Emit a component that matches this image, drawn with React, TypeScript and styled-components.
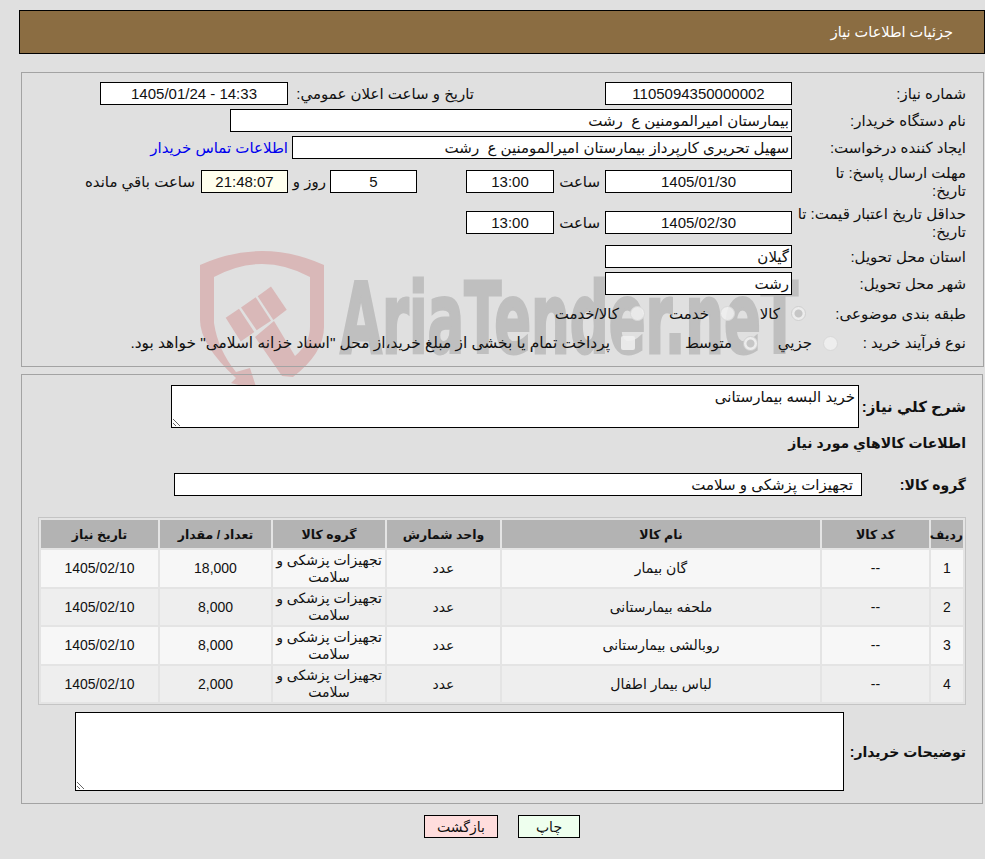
import React from 'react';
import styled, { createGlobalStyle } from 'styled-components';

const GlobalStyle = createGlobalStyle`
  html, body {
    margin: 0;
    padding: 0;
    background: #e0e0e0;
  }
  body {
    font-family: "Liberation Sans", "DejaVu Sans", sans-serif;
    font-size: 15px;
    color: #111;
  }
`;

const items = [
  { id: 1, name: 'گان بيمار', qty: '18,000' },
  { id: 2, name: 'ملحفه بيمارستانی', qty: '8,000' },
  { id: 3, name: 'روبالشی بيمارستانی', qty: '8,000' },
  { id: 4, name: 'لباس بيمار اطفال', qty: '2,000' },
];

function Watermark() {
  return (
    <WatermarkSvg viewBox="0 0 620 150" width="620" height="150">
      <g fill="#d9b8b8">
        <path d="M10 20 Q72 -8 134 20 L134 82 Q134 108 103 132 L92 131 L65 92 L84 76 L105 111 Q120 98 120 82 L120 32 Q72 6 24 32 L24 78 Q28 105 46 127 L60 123 L67 145 L41 138 L46 133 Q10 100 10 75 Z" />
        <path d="M35.7 72.7 L49 63.8 L64.3 87 L50.7 96.6 Z" />
        <path d="M51 62.5 L65.7 52.2 L81 75.8 L66.7 85.3 Z" />
        <path d="M67.7 51.2 L81 41.6 L96.7 64.8 L83.3 75 Z" />
      </g>
      <WatermarkText x="150" y="108" textLength="458" lengthAdjust="spacingAndGlyphs">
        AriaTender.neT
      </WatermarkText>
    </WatermarkSvg>
  );
}

export default function App() {
  return (
    <>
      <GlobalStyle />
      <Page dir="rtl">
        <Watermark />
        <Content>
          <Header>جزئيات اطلاعات نياز</Header>

          <InfoPanel>
            <Row $h={27}>
              <Label>شماره نياز:</Label>
              <Field $w={187} $center>1105094350000002</Field>
              <InlineLabel $w={317} $pad={131}>تاريخ و ساعت اعلان عمومي:</InlineLabel>
              <Field $w={188} $center>14:33 - 1405/01/24</Field>
            </Row>
            <Row $h={27}>
              <Label>نام دستگاه خريدار:</Label>
              <Field $w={562}>بيمارستان اميرالمومنين ع  رشت</Field>
            </Row>
            <Row $h={34}>
              <Label>ايجاد كننده درخواست:</Label>
              <Field $w={500}>سهيل تحريری كارپرداز بيمارستان اميرالمومنين ع  رشت</Field>
              <ContactLink href="#" onClick={(e) => e.preventDefault()}>اطلاعات تماس خريدار</ContactLink>
            </Row>
            <Row $h={41}>
              <Label $lift>مهلت ارسال پاسخ: تا<br />تاريخ:</Label>
              <Field $w={187} $center>1405/01/30</Field>
              <InlineLabel $w={51} $pad={5}>ساعت</InlineLabel>
              <Field $w={88} $center>13:00</Field>
              <Spacer $w={49} />
              <Field $w={87} $center>5</Field>
              <InlineLabel $w={42} $pad={4}>روز و</InlineLabel>
              <Field $w={87} $center $tint="#ffffee">21:48:07</Field>
              <InlineLabel $w={120} $pad={6}>ساعت باقي مانده</InlineLabel>
            </Row>
            <Row $h={34}>
              <Label $lift>حداقل تاريخ اعتبار قيمت: تا<br />تاريخ:</Label>
              <Field $w={187} $center>1405/02/30</Field>
              <InlineLabel $w={51} $pad={5}>ساعت</InlineLabel>
              <Field $w={88} $center>13:00</Field>
            </Row>
            <Row $h={27}>
              <Label>استان محل تحويل:</Label>
              <Field $w={187}>گيلان</Field>
            </Row>
            <Row $h={27}>
              <Label>شهر محل تحويل:</Label>
              <Field $w={187}>رشت</Field>
            </Row>
            <ChoiceRow $h={29}>
              <Label $mid>طبقه بندی موضوعی:</Label>
              <Choices $pull={-14}>
                <Choice $w={71}><RadioMark $checked />كالا</Choice>
                <Choice $w={90}><RadioMark />خدمت</Choice>
                <Choice><RadioMark />كالا/خدمت</Choice>
              </Choices>
            </ChoiceRow>
            <ChoiceRow $h={30}>
              <Label $mid>نوع فرآيند خريد :</Label>
              <Choices $pull={-46}>
                <Choice $w={80}><RadioMark />جزيي</Choice>
                <Choice $w={123}><RadioMark $checked />متوسط</Choice>
                <Choice $size={15.4}><CheckMark />پرداخت تمام يا بخشی از مبلغ خريد،از محل "اسناد خزانه اسلامی" خواهد بود.</Choice>
              </Choices>
            </ChoiceRow>
          </InfoPanel>

          <GoodsPanel>
            <SummaryRow>
              <BoldLabel $w={107} $size={15}>شرح كلي نياز:</BoldLabel>
              <NoteArea $w={688} $h={43} readOnly defaultValue="خريد البسه بيمارستانی" />
            </SummaryRow>
            <SectionTitle>اطلاعات كالاهاي مورد نياز</SectionTitle>
            <GroupRow>
              <BoldLabel $w={104}>گروه كالا:</BoldLabel>
              <GroupField>تجهيزات پزشكی و سلامت</GroupField>
            </GroupRow>

            <GoodsTable>
              <colgroup>
                <col width={32} />
                <col width={107} />
                <col width={318} />
                <col width={113} />
                <col width={112} />
                <col width={111} />
                <col width={117} />
              </colgroup>
              <thead>
                <tr>
                  <HeadCell>رديف</HeadCell>
                  <HeadCell>كد كالا</HeadCell>
                  <HeadCell>نام كالا</HeadCell>
                  <HeadCell>واحد شمارش</HeadCell>
                  <HeadCell>گروه كالا</HeadCell>
                  <HeadCell>تعداد / مقدار</HeadCell>
                  <HeadCell>تاريخ نياز</HeadCell>
                </tr>
              </thead>
              <tbody>
                {items.map((item) => (
                  <BodyRow key={item.id}>
                    <td>{item.id}</td>
                    <td>--</td>
                    <td>{item.name}</td>
                    <td>عدد</td>
                    <td>تجهيزات پزشكی و سلامت</td>
                    <td>{item.qty}</td>
                    <td>1405/02/10</td>
                  </BodyRow>
                ))}
              </tbody>
            </GoodsTable>

            <BuyerRow>
              <BoldLabel $w={122}>توضيحات خريدار:</BoldLabel>
              <NoteArea $w={769} $h={79} readOnly />
            </BuyerRow>
          </GoodsPanel>

          <Actions>
            <ActionButton $bg="#eeffee" $w={62}>چاپ</ActionButton>
            <ActionButton $bg="#ffdddd" $w={74}>بازگشت</ActionButton>
          </Actions>
        </Content>
      </Page>
    </>
  );
}

const Page = styled.div`
  position: relative;
  width: 985px;
  height: 859px;
  overflow: hidden;
`;

const WatermarkSvg = styled.svg`
  position: absolute;
  left: 190px;
  top: 245px;
  direction: ltr;
`;

const WatermarkText = styled.text`
  font-family: "DejaVu Sans", sans-serif;
  font-weight: 700;
  font-size: 98px;
  fill: #bfbfbf;
  stroke: #bfbfbf;
  stroke-width: 3px;
`;

const Content = styled.div`
  position: relative;
  padding-top: 10px;
`;

const Header = styled.div`
  box-sizing: border-box;
  height: 44px;
  margin-left: 19px;
  padding-right: 31px;
  background: #8b6d42;
  border: 1px solid #000;
  color: #fff;
  line-height: 42px;
  font-size: 14.5px;
`;

const InfoPanel = styled.div`
  box-sizing: border-box;
  height: 295px;
  margin: 18px 1px 0 21px;
  padding: 9px 17px 0 0;
  border: 1px solid #a3a3a3;
`;

const Row = styled.div<{ $h: number }>`
  display: flex;
  align-items: flex-start;
  height: ${(p) => p.$h}px;
  line-height: 18px;
`;

const ChoiceRow = styled(Row)`
  align-items: center;
`;

const Label = styled.div<{ $mid?: boolean; $lift?: boolean }>`
  flex: none;
  width: 174px;
  margin-top: ${(p) => (p.$lift ? -6 : 0)}px;
  padding-top: ${(p) => (p.$mid || p.$lift ? 0 : 3)}px;
`;

const InlineLabel = styled.div<{ $w: number; $pad: number }>`
  box-sizing: border-box;
  flex: none;
  width: ${(p) => p.$w}px;
  padding: 3px ${(p) => p.$pad}px 0 0;
  white-space: nowrap;
`;

const Spacer = styled.div<{ $w: number }>`
  flex: none;
  width: ${(p) => p.$w}px;
`;

const Field = styled.div<{ $w: number; $center?: boolean; $tint?: string }>`
  box-sizing: border-box;
  flex: none;
  width: ${(p) => p.$w}px;
  height: 23px;
  padding: 0 2px;
  border: 1px solid #000;
  background: ${(p) => p.$tint ?? '#fff'};
  line-height: 21px;
  text-align: ${(p) => (p.$center ? 'center' : 'right')};
  white-space: pre;
`;

const ContactLink = styled.a`
  flex: none;
  margin-right: 4px;
  padding-top: 3px;
  color: #0000ee;
  text-decoration: none;
`;

const Choices = styled.div<{ $pull?: number }>`
  display: flex;
  align-items: center;
  margin-right: ${(p) => p.$pull ?? 0}px;
`;

const Choice = styled.div<{ $w?: number; $size?: number }>`
  display: flex;
  align-items: center;
  gap: 11px;
  width: ${(p) => (p.$w ? `${p.$w}px` : 'auto')};
  font-size: ${(p) => p.$size ?? 15}px;
  white-space: nowrap;
`;

const RadioMark = styled.span<{ $checked?: boolean }>`
  box-sizing: border-box;
  flex: none;
  width: 15px;
  height: 15px;
  border-radius: 50%;
  border: ${(p) => (p.$checked ? '1px solid #d0d0d0' : '1px solid #d8d8d8')};
  background: ${(p) => (p.$checked ? 'radial-gradient(circle, #c6c6c6 0 3.5px, #ececec 4.5px)' : 'rgba(240, 240, 240, 0.85)')};
`;

const CheckMark = styled.span`
  flex: none;
  width: 14px;
  height: 14px;
  border-radius: 2px;
  background: rgba(240, 240, 240, 0.85);
`;

const GoodsPanel = styled.div`
  box-sizing: border-box;
  height: 430px;
  margin: 7px 2px 0 21px;
  padding: 10px 16px 0;
  border: 1px solid #a3a3a3;
`;

const SummaryRow = styled.div`
  display: flex;
  align-items: center;
`;

const BoldLabel = styled.div<{ $w: number; $size?: number }>`
  flex: none;
  width: ${(p) => p.$w}px;
  font-size: ${(p) => p.$size ?? 14}px;
  font-weight: 700;
`;

const NoteArea = styled.textarea<{ $w: number; $h: number }>`
  box-sizing: border-box;
  display: block;
  width: ${(p) => p.$w}px;
  height: ${(p) => p.$h}px;
  padding: 2px 3px;
  border: 1px solid #000;
  border-radius: 0;
  outline: none;
  background: #fff;
  color: #111;
  font: inherit;
`;

const SectionTitle = styled.div`
  margin-top: 5px;
  font-size: 14px;
  font-weight: 700;
  line-height: 20px;
`;

const GroupRow = styled.div`
  display: flex;
  align-items: center;
  margin-top: 20px;
`;

const GroupField = styled.div`
  box-sizing: border-box;
  width: 688px;
  height: 23px;
  padding: 0 8px;
  border: 1px solid #000;
  background: #fff;
  line-height: 21px;
`;

const GoodsTable = styled.table`
  width: 928px;
  margin-top: 21px;
  table-layout: fixed;
  border: 1px solid #c4c4c4;
  border-spacing: 2px;
  background: #e4e4e4;
  font-size: 14px;
  text-align: center;
`;

const HeadCell = styled.th`
  height: 28px;
  padding: 0;
  background: #b3b3b3;
  font-size: 12.5px;
  font-weight: 700;
`;

const BodyRow = styled.tr`
  td {
    height: 35.5px;
    padding: 1px 0 0;
    line-height: 17px;
    background: #f7f7f7;
  }
  &:nth-child(even) td {
    background: #eeeeee;
  }
`;

const BuyerRow = styled.div`
  display: flex;
  align-items: center;
  margin-top: 7px;
`;

const Actions = styled.div`
  display: flex;
  justify-content: center;
  gap: 20px;
  margin-top: 11px;
  padding-left: 19px;
`;

const ActionButton = styled.button<{ $bg: string; $w: number }>`
  box-sizing: border-box;
  width: ${(p) => p.$w}px;
  height: 23px;
  padding: 0;
  border: 1px solid #000;
  background: ${(p) => p.$bg};
  color: #111;
  font: inherit;
  font-size: 14px;
`;
